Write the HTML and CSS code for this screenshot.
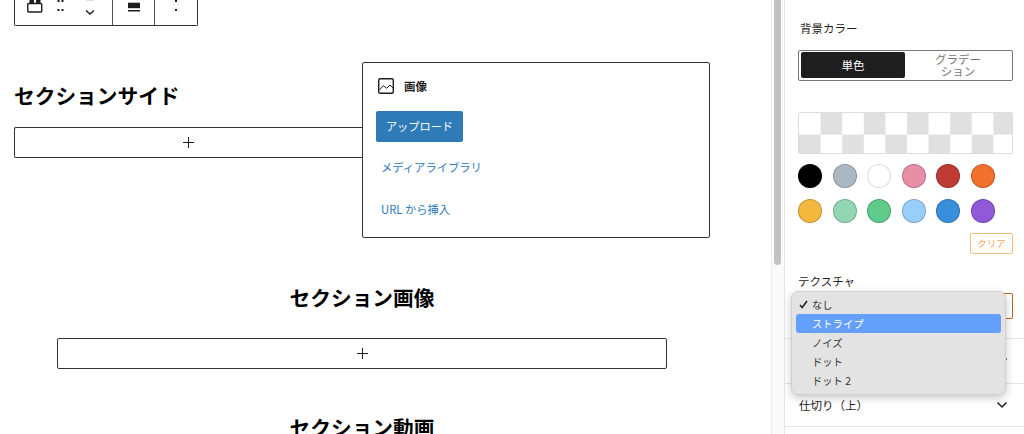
FILE: index.html
```html
<!DOCTYPE html>
<html lang="ja">
<head>
  <meta charset="utf-8">
  <title>セクション編集</title>
  <link rel="stylesheet" href="styles.css">
</head>
<body>
  <div class="app">
    <main class="editor">
      <div class="toolbar">
        <div class="tool tool-first">
          <svg class="ic-block" width="18" height="13" viewBox="0 0 18 13"><rect x="2.750" y="3.500" width="14" height="8.500" rx="1" fill="none" stroke="#1e1e1e" stroke-width="1.400"/><path d="M4.500 0h4.500v3.500H4.500zM11 0h4.500v3.500H11z" fill="#1e1e1e"/></svg>
          <svg class="ic-drag" width="8" height="12" viewBox="0 0 8 12"><g fill="#1e1e1e"><rect x="0.500" y="0" width="2" height="2"/><rect x="4.500" y="0" width="2" height="2"/><rect x="0.500" y="9" width="2" height="2"/><rect x="4.500" y="9" width="2" height="2"/></g></svg>
          <svg class="ic-down" width="10" height="15" viewBox="0 0 10 15"><path d="M1 0.500h8" fill="none" stroke="#ddd" stroke-width="1"/><path d="M1 10.500 5 14l4-3.500" fill="none" stroke="#1e1e1e" stroke-width="1.400"/></svg>
        </div>
        <div class="tool tool-align">
          <svg width="14" height="13" viewBox="0 0 14 13"><rect x="1" y="2.700" width="12" height="5.500" fill="#1e1e1e"/><rect x="1" y="10" width="12" height="1.500" fill="#1e1e1e"/></svg>
        </div>
        <div class="tool tool-more">
          <svg width="4" height="12" viewBox="0 0 4 12"><g fill="#1e1e1e"><rect x="1" y="0" width="2" height="2"/><rect x="1" y="9" width="2" height="2"/></g></svg>
        </div>
      </div>

      <section class="side-row">
        <div class="side-left">
          <h2 class="sec-title">セクションサイド</h2>
          <div class="appender"><span class="plus"></span></div>
        </div>
        <div class="placeholder">
          <div class="ph-head">
            <svg width="18" height="18" viewBox="0 0 18 18"><rect x="1.700" y="1.700" width="14.600" height="14.600" rx="1.500" fill="none" stroke="#1e1e1e" stroke-width="1.400"/><path d="M2.300 13 6.300 8.700 9.700 11.300 13 8l3.300 3.300" fill="none" stroke="#1e1e1e" stroke-width="1"/></svg>
            <span>画像</span>
          </div>
          <div class="ph-btn">アップロード</div>
          <div class="ph-link ph-link-first">メディアライブラリ</div>
          <div class="ph-link">URL から挿入</div>
        </div>
      </section>

      <section class="center-sec">
        <h2 class="sec-title">セクション画像</h2>
        <div class="appender appender-wide"><span class="plus"></span></div>
      </section>

      <section class="center-sec center-last">
        <h2 class="sec-title">セクション動画</h2>
      </section>
    </main>

    <div class="scroll"><div class="scroll-thumb"></div></div>

    <aside class="panel">
      <div class="label label-bg">背景カラー</div>
      <div class="segment">
        <div class="seg seg-on">単色</div>
        <div class="seg seg-off">グラデー<br>ション</div>
      </div>
      <div class="checker"></div>
      <div class="swatches">
        <span class="sw" style="background:#000000"></span>
        <span class="sw" style="background:#abb8c3"></span>
        <span class="sw sw-white" style="background:#ffffff"></span>
        <span class="sw" style="background:#e78fa7"></span>
        <span class="sw" style="background:#bf3b35"></span>
        <span class="sw" style="background:#f2702c"></span>
        <span class="sw" style="background:#f4b83e"></span>
        <span class="sw" style="background:#92d6b4"></span>
        <span class="sw" style="background:#5ecb8b"></span>
        <span class="sw" style="background:#9acefa"></span>
        <span class="sw" style="background:#3a8fdc"></span>
        <span class="sw" style="background:#9159d8"></span>
      </div>
      <div class="clear-row"><span class="clear">クリア</span></div>
      <div class="label label-tex">テクスチャ</div>
      <div class="select-box"></div>
      <div class="rows">
        <div class="row row-a"><svg class="chev" width="12" height="8" viewBox="0 0 12 8"><path d="M1.500 1.500 6 6l4.500-4.500" fill="none" stroke="#1e1e1e" stroke-width="1.500"/></svg></div>
        <div class="row row-b"><span>仕切り（上）</span><svg class="chev" width="12" height="8" viewBox="0 0 12 8"><path d="M1.500 1.500 6 6l4.500-4.500" fill="none" stroke="#1e1e1e" stroke-width="1.500"/></svg></div>
      </div>
      <ul class="menu">
        <li class="opt"><svg class="check" width="9" height="9" viewBox="0 0 9 9"><path d="M1 5l2.200 2.500L8 1" fill="none" stroke="#222" stroke-width="1.600"/></svg>なし</li>
        <li class="opt opt-on">ストライプ</li>
        <li class="opt">ノイズ</li>
        <li class="opt">ドット</li>
        <li class="opt">ドット 2</li>
      </ul>
    </aside>
  </div>
</body>
</html>
```

FILE: styles.css
```css
html, body {
  margin: 0;
  padding: 0;
  height: 434px;
  overflow: hidden;
  background: #fff;
  font-family: "Noto Sans CJK JP", "Liberation Sans", sans-serif;
  color: #1e1e1e;
}

.app {
  display: flex;
  height: 434px;
}

.editor {
  width: 771px;
  flex: none;
  padding-left: 14px;
  box-sizing: border-box;
  overflow: hidden;
}

.toolbar {
  display: flex;
  width: 184px;
  height: 26px;
  box-sizing: border-box;
  border: 1px solid #333;
  border-top: 0;
  border-radius: 0 0 2px 2px;
}

.tool {
  display: flex;
  align-items: flex-start;
  justify-content: center;
  box-sizing: border-box;
  height: 25px;
  border-right: 1px solid #555;
}

.tool-first { width: 98px; justify-content: flex-start; padding-left: 10px; }
.tool-align { width: 42px; }
.tool-more { width: 42px; border-right: 0; }

.ic-drag { margin-left: 14px; }
.ic-down { margin-left: 20px; }

.side-row {
  display: flex;
  align-items: flex-start;
  margin-top: 36px;
}

.side-left {
  width: 348px;
  padding-top: 17px;
}

.sec-title {
  margin: 0;
  font-size: 20.700px;
  line-height: 32px;
  font-weight: 700;
  color: #000;
}

.appender {
  position: relative;
  height: 31px;
  margin-top: 16px;
  box-sizing: border-box;
  border: 1px solid #333;
  border-radius: 2px 0 0 2px;
  border-right: 0;
  display: flex;
  align-items: center;
  justify-content: center;
}

.plus {
  position: relative;
  width: 11px;
  height: 11px;
}

.plus::before, .plus::after {
  content: "";
  position: absolute;
  background: #1e1e1e;
}

.plus::before { left: 0; right: 0; top: 5px; height: 1px; }
.plus::after { top: 0; bottom: 0; left: 5px; width: 1px; }

.placeholder {
  width: 348px;
  height: 176px;
  box-sizing: border-box;
  border: 1px solid #333;
  border-radius: 2px;
  padding: 13px 13px 0;
}

.ph-head {
  display: flex;
  align-items: center;
  gap: 9px;
  height: 20px;
  padding-left: 1px;
  font-size: 11.500px;
  font-weight: 700;
}

.ph-btn {
  width: 87px;
  height: 31px;
  margin-top: 15px;
  background: #2f7bb8;
  color: #fff;
  font-size: 11.200px;
  line-height: 31px;
  text-align: center;
  border-radius: 2px;
}

.ph-link {
  margin-top: 11px;
  height: 31px;
  padding-left: 5px;
  color: #2f7bb8;
  font-size: 11.300px;
  line-height: 31px;
}

.ph-link-first { margin-top: 10px; }

.center-sec {
  width: 610px;
  margin: 43px 0 0 43px;
}

.center-sec .sec-title { text-align: center; }

.appender-wide {
  margin-top: 25px;
  border-right: 1px solid #333;
  border-radius: 2px;
}

.center-last { margin-top: 42px; }

.scroll {
  width: 14px;
  flex: none;
  box-sizing: border-box;
  background: #fafafa;
  border-left: 1px solid #eee;
  border-right: 1px solid #e4e4e4;
  padding: 0 2px;
}

.scroll-thumb {
  width: 7px;
  height: 265px;
  background: #c2c2c2;
  border-radius: 0 0 4px 4px;
}

.panel {
  position: relative;
  flex: 1;
  min-width: 0;
  box-sizing: border-box;
  padding-left: 13px;
}

.label {
  font-size: 11.500px;
  line-height: 16px;
}

.label-bg { padding: 20px 0 0 2px; }

.segment {
  display: flex;
  box-sizing: border-box;
  width: 215px;
  height: 31px;
  margin-top: 14px;
  padding: 1px 1px 2px 2px;
  border: 1px solid #777;
  border-radius: 2px;
}

.seg {
  display: flex;
  align-items: center;
  justify-content: center;
  text-align: center;
  font-size: 11.500px;
}

.seg-on {
  width: 104px;
  background: #1e1e1e;
  color: #fff;
  border-radius: 2px;
}

.seg-off {
  flex: 1;
  color: #757575;
  line-height: 12px;
}

.checker {
  width: 215px;
  height: 42px;
  margin-top: 31px;
  box-sizing: border-box;
  border: 1px solid #ddd;
  border-radius: 2px;
  background: repeating-conic-gradient(#e0e0e0 0 25%, #fff 0 50%) 0 0 / 43.200px 43.200px;
}

.swatches {
  display: grid;
  grid-template-columns: repeat(6, 24px);
  gap: 11px 10.500px;
  margin-top: 10px;
}

.sw {
  width: 24px;
  height: 24px;
  box-sizing: border-box;
  border-radius: 50%;
  box-shadow: inset 0 0 0 1px rgba(0, 0, 0, 0.2);
}

.sw-white { box-shadow: inset 0 0 0 1px #ddd; }

.clear-row {
  display: flex;
  justify-content: flex-end;
  width: 215px;
  margin-top: 10px;
}

.clear {
  width: 43px;
  height: 21px;
  box-sizing: border-box;
  border: 1.500px solid #f7bd7c;
  border-radius: 2px;
  color: #f3a65c;
  font-size: 9.500px;
  line-height: 18px;
  text-align: center;
}

.label-tex { margin-top: 19px; }

.select-box {
  width: 215px;
  height: 26px;
  margin-top: 4px;
  box-sizing: border-box;
  border: 1px solid #b26a1e;
  border-radius: 2px;
}

.rows { margin: 19px 0 0 -13px; }

.row {
  display: flex;
  align-items: center;
  justify-content: space-between;
  box-sizing: border-box;
  padding: 0 16px 0 14px;
  border-top: 1px solid #e4e4e4;
  font-size: 11.500px;
}

.row-a { height: 45px; }
.row-b { height: 44px; border-bottom: 1px solid #e4e4e4; }
.row-a .chev { margin-left: auto; }

.menu {
  position: absolute;
  left: 6px;
  top: 291px;
  width: 215px;
  height: 104px;
  box-sizing: border-box;
  margin: 0;
  padding: 3px 4px;
  list-style: none;
  background: #e3e3e3;
  border: 1px solid #d0d0d0;
  border-radius: 7px;
  box-shadow: 0 3px 8px rgba(0, 0, 0, 0.22);
}

.opt {
  position: relative;
  height: 19px;
  padding-left: 16px;
  font-size: 10.300px;
  line-height: 19px;
  color: #333;
  border-radius: 3px;
}

.opt-on {
  background: #64a0fb;
  color: #fff;
}

.check {
  position: absolute;
  left: 3px;
  top: 5px;
}
```
